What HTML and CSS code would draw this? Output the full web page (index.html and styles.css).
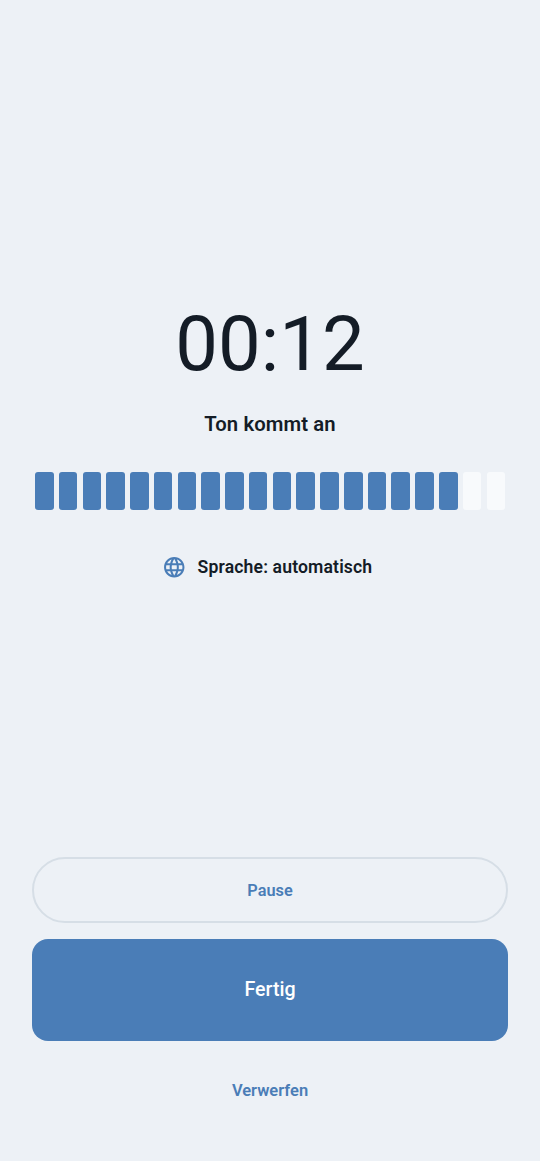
FILE: index.html
```html
<!DOCTYPE html>
<html lang="de">
<head>
<meta charset="utf-8">
<meta name="viewport" content="width=device-width, initial-scale=1">
<title>Aufnahme</title>
<link rel="stylesheet" href="styles.css">
</head>
<body>
<main class="screen">
  <section class="recorder">
    <div class="timer">00:12</div>
    <div class="status">Ton kommt an</div>
    <div class="meter">
      <i class="on"></i><i class="on"></i><i class="on"></i><i class="on"></i><i class="on"></i>
      <i class="on"></i><i class="on"></i><i class="on"></i><i class="on"></i><i class="on"></i>
      <i class="on"></i><i class="on"></i><i class="on"></i><i class="on"></i><i class="on"></i>
      <i class="on"></i><i class="on"></i><i class="on"></i><i></i><i></i>
    </div>
    <div class="language">
      <svg class="globe" viewBox="0 0 24 24" aria-hidden="true"><path d="M11.99 2C6.47 2 2 6.48 2 12s4.47 10 9.99 10C17.52 22 22 17.52 22 12S17.52 2 11.99 2zm6.93 6h-2.95c-.32-1.25-.78-2.45-1.38-3.56 1.84.63 3.37 1.91 4.33 3.56zM12 4.04c.83 1.2 1.48 2.53 1.91 3.96h-3.82c.43-1.43 1.08-2.76 1.91-3.96zM4.26 14C4.1 13.36 4 12.69 4 12s.1-1.36.26-2h3.38c-.08.66-.14 1.32-.14 2s.06 1.34.14 2H4.26zm.82 2h2.95c.32 1.25.78 2.45 1.38 3.56-1.84-.63-3.37-1.9-4.33-3.56zm2.95-8H5.08c.96-1.66 2.49-2.93 4.33-3.56C8.81 5.55 8.35 6.75 8.03 8zM12 19.96c-.83-1.2-1.48-2.53-1.91-3.96h3.82c-.43 1.43-1.08 2.76-1.91 3.96zM14.34 14H9.66c-.09-.66-.16-1.32-.16-2s.07-1.35.16-2h4.68c.09.65.16 1.32.16 2s-.07 1.34-.16 2zm.25 5.56c.6-1.11 1.06-2.31 1.38-3.56h2.95c-.96 1.65-2.49 2.93-4.33 3.56zM16.36 14c.08-.66.14-1.32.14-2s-.06-1.34-.14-2h3.38c.16.64.26 1.31.26 2s-.1 1.36-.26 2h-3.38z"/></svg>
      <span>Sprache: automatisch</span>
    </div>
  </section>
  <section class="actions">
    <button class="pause">Pause</button>
    <button class="done">Fertig</button>
    <button class="discard">Verwerfen</button>
  </section>
</main>
</body>
</html>
```
FILE: styles.css
```css
* { box-sizing: border-box; }
body { margin: 0; background: #edf1f6; color: #141c26; font-family: Roboto, sans-serif; }
.screen { height: 1161px; padding: 0 32.4px 38px; display: flex; flex-direction: column; }
.recorder { flex: 1; padding-top: 299px; display: flex; flex-direction: column; align-items: center; }
.timer { font-size: 76px; line-height: 90px; }
.status { margin-top: 21px; font-size: 20.3px; line-height: 28px; font-weight: 600; letter-spacing: .1px; }
.meter { width: 100%; height: 38px; margin-top: 34.4px; padding: 0 2.6px; display: flex; gap: 5.2px; }
.meter i { flex: 1; border-radius: 3px; background: #f8fafc; }
.meter .on { background: #4a7db7; }
.language { margin-top: 44.6px; height: 24px; padding-right: 5.6px; display: flex; align-items: center; gap: 11px; font-size: 17.6px; font-weight: 600; letter-spacing: .14px; }
.globe { width: 24.5px; height: 24.5px; fill: #4a7db7; }
.actions { display: flex; flex-direction: column; }
button { border: 0; padding: 0; background: none; color: #4a7db7; font: 600 16.3px/24px Roboto, sans-serif; }
.pause { height: 66px; padding-top: 2px; border: 1.9px solid #d6dee6; border-width: 2px; border-radius: 33px; }
.done { height: 101.4px; margin-top: 16.2px; border-radius: 16px; background: #4a7db7; color: #fff; font-size: 19.6px; font-weight: 500; }
.discard { height: 66px; margin-top: 16.4px; padding-top: 2px; font-size: 16.5px; }
```
